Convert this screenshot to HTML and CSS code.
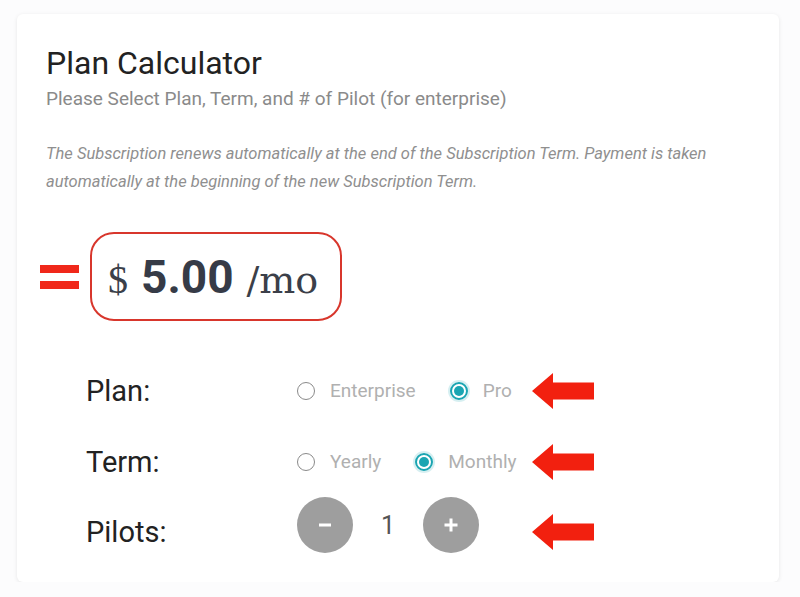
FILE: index.html
```html
<!DOCTYPE html>
<html lang="en">
<head>
<meta charset="utf-8">
<title>Plan Calculator</title>
<link rel="stylesheet" href="styles.css">
</head>
<body>
<div class="card">
  <h1 class="title">Plan Calculator</h1>
  <p class="subtitle">Please Select Plan, Term, and # of Pilot (for enterprise)</p>
  <p class="note">The Subscription renews automatically at the end of the Subscription Term. Payment is taken automatically at the beginning of the new Subscription Term.</p>

  <div class="price-row">
    <div class="equals"><span class="bar"></span><span class="bar"></span></div>
    <div class="price-box">
      <span class="currency">$</span>
      <span class="amount">5.00</span>
      <span class="period">/mo</span>
    </div>
  </div>

  <div class="rows">
    <div class="label">Plan:</div>
    <div class="options">
      <label class="option"><span class="radio"></span><span class="opt-text">Enterprise</span></label>
      <label class="option"><span class="radio checked"></span><span class="opt-text">Pro</span></label>
    </div>
    <div class="arrow"><svg viewBox="0 0 62 36" width="62" height="36"><polygon points="0,18 21,0 21,9.5 62,9.5 62,26.5 21,26.5 21,36" fill="#f2200f"/></svg></div>

    <div class="label">Term:</div>
    <div class="options">
      <label class="option"><span class="radio"></span><span class="opt-text">Yearly</span></label>
      <label class="option"><span class="radio checked"></span><span class="opt-text">Monthly</span></label>
    </div>
    <div class="arrow"><svg viewBox="0 0 62 36" width="62" height="36"><polygon points="0,18 21,0 21,9.5 62,9.5 62,26.5 21,26.5 21,36" fill="#f2200f"/></svg></div>

    <div class="label low">Pilots:</div>
    <div class="stepper">
      <button class="step-btn" aria-label="decrease"><svg viewBox="0 0 20 20" width="20" height="20"><rect x="4" y="8.5" width="12" height="3" fill="#fff"/></svg></button>
      <span class="count">1</span>
      <button class="step-btn" aria-label="increase"><svg viewBox="0 0 20 20" width="20" height="20"><rect x="3.5" y="8.5" width="13" height="3" fill="#fff"/><rect x="8.5" y="3.5" width="3" height="13" fill="#fff"/></svg></button>
    </div>
    <div class="arrow low"><svg viewBox="0 0 62 36" width="62" height="36"><polygon points="0,18 21,0 21,9.5 62,9.5 62,26.5 21,26.5 21,36" fill="#f2200f"/></svg></div>
  </div>
</div>
</body>
</html>
```

FILE: styles.css
```css
html, body {
  margin: 0;
  padding: 0;
  background: #fcfcfd;
}

body {
  font-family: Roboto, "Noto Sans", sans-serif;
}

.card {
  box-sizing: border-box;
  width: 762px;
  height: 568px;
  margin: 14px 0 0 17px;
  padding: 31px 29px 0;
  background: #ffffff;
  border-radius: 6px;
  box-shadow: 0 1px 4px rgba(0, 0, 0, 0.09);
}

.title {
  margin: 0;
  font-size: 32px;
  line-height: 36px;
  font-weight: 400;
  color: #222222;
}

.subtitle {
  margin: 6px 0 0;
  font-size: 19px;
  line-height: 24px;
  color: #8a8a8a;
}

.note {
  margin: 29px 0 0;
  font-size: 16.5px;
  line-height: 28px;
  font-style: italic;
  color: #8f8f8f;
}

.price-row {
  display: flex;
  align-items: center;
  margin: 36px 0 0 -6px;
}

.equals {
  display: flex;
  flex-direction: column;
  gap: 8px;
  width: 39px;
}

.equals .bar {
  display: block;
  height: 8px;
  background: #f0281a;
}

.price-box {
  box-sizing: border-box;
  display: flex;
  align-items: baseline;
  gap: 13px;
  width: 252px;
  height: 89px;
  margin-left: 11px;
  padding: 14px 16px 0;
  border: 2px solid #d8362c;
  border-radius: 24px;
  color: #363b47;
}

.currency {
  font-family: "Liberation Serif", serif;
  font-size: 40px;
  line-height: 58px;
  color: #3b3f49;
}

.amount {
  font-family: Roboto, sans-serif;
  font-weight: 700;
  font-size: 46px;
  line-height: 58px;
}

.period {
  font-family: "DejaVu Serif", serif;
  font-size: 38px;
  line-height: 58px;
  color: #3b3f49;
}

.rows {
  display: grid;
  grid-template-columns: 211px 235px 62px;
  grid-template-rows: 71px 71px 56px;
  align-items: center;
  margin: 34px 0 0 40px;
}

.label {
  font-size: 29px;
  color: #222222;
}

.low {
  padding-top: 13px;
}

.options {
  display: flex;
  align-items: center;
  gap: 34px;
}

.option {
  display: flex;
  align-items: center;
  gap: 15px;
}

.radio {
  box-sizing: border-box;
  position: relative;
  width: 18px;
  height: 18px;
  border: 1.5px solid #8a8a8a;
  border-radius: 50%;
}

.radio.checked {
  border: 2px solid #1aa5b2;
  box-shadow: 0 0 0 2px rgba(26, 165, 178, 0.18);
}

.radio.checked::after {
  content: "";
  position: absolute;
  left: 2px;
  top: 2px;
  width: 10px;
  height: 10px;
  border-radius: 50%;
  background: #1aa5b2;
}

.opt-text {
  font-size: 19px;
  color: #b0b0b0;
}

.stepper {
  display: flex;
  align-items: center;
}

.step-btn {
  display: flex;
  align-items: center;
  justify-content: center;
  width: 56px;
  height: 56px;
  padding: 0;
  border: none;
  border-radius: 50%;
  background: #9e9e9e;
}

.count {
  width: 70px;
  text-align: center;
  font-size: 25px;
  color: #555555;
}

.arrow {
  display: flex;
  align-items: center;
}

.arrow svg {
  display: block;
}
```
